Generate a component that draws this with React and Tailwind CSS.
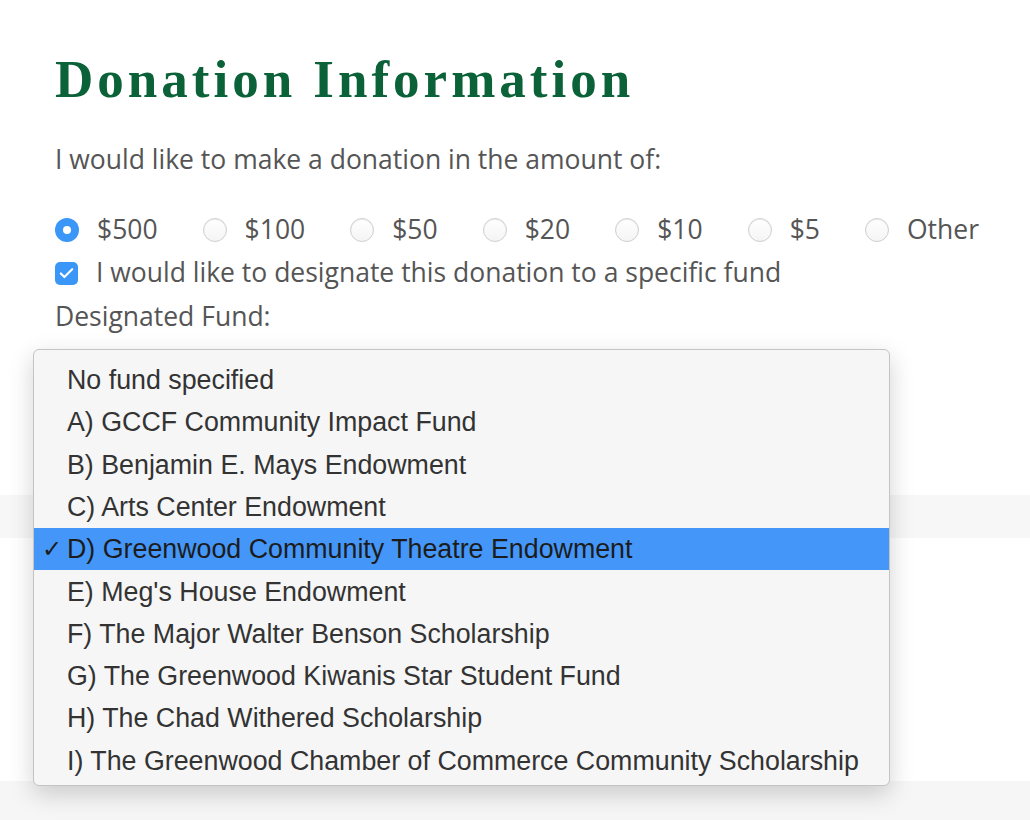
import { Check } from 'lucide-react';

const amounts = ['$500', '$100', '$50', '$20', '$10', '$5', 'Other'];

const funds = [
  'No fund specified',
  'A) GCCF Community Impact Fund',
  'B) Benjamin E. Mays Endowment',
  'C) Arts Center Endowment',
  'D) Greenwood Community Theatre Endowment',
  "E) Meg's House Endowment",
  'F) The Major Walter Benson Scholarship',
  'G) The Greenwood Kiwanis Star Student Fund',
  'H) The Chad Withered Scholarship',
  'I) The Greenwood Chamber of Commerce Community Scholarship',
];

const selectedFund = 4;

function Radio({ checked }) {
  if (checked) {
    return (
      <span className="flex h-[24px] w-[24px] shrink-0 items-center justify-center rounded-full bg-[#3b97f7]">
        <span className="h-[8px] w-[8px] rounded-full bg-white" />
      </span>
    );
  }
  return (
    <span className="h-[24px] w-[24px] shrink-0 rounded-full border border-[#cfcfcf] bg-gradient-to-b from-white to-[#f4f4f4] shadow-[inset_0_1px_1px_rgba(0,0,0,0.08)]" />
  );
}

function FundMenu() {
  return (
    <div className="absolute left-[33px] top-[349px] w-[857px] rounded-[6px] border border-[#c4c4c4] bg-[#f6f6f6] pt-[9px] pb-[3px] shadow-[0_8px_24px_rgba(0,0,0,0.18)] font-['Liberation_Sans',Arial,sans-serif] text-[26.8px] text-[#333]">
      {funds.map((fund, i) => {
        const active = i === selectedFund;
        return (
          <div
            key={fund}
            className={`relative flex h-[42.3px] items-center pl-[33px] ${active ? 'bg-[#4497f8] text-[#1c1c1c]' : ''}`}
          >
            {active && (
              <span className="absolute left-[8px] top-1/2 -translate-y-1/2 font-['DejaVu_Sans',sans-serif] text-[24px]">✓</span>
            )}
            {fund}
          </div>
        );
      })}
    </div>
  );
}

export default function App() {
  return (
    <div className="relative min-h-[820px] w-full overflow-hidden bg-white font-['Open_Sans',sans-serif] text-[#555]">
      <div className="px-[55px] pt-[53px]">
        <h1 className="font-['Liberation_Serif',serif] text-[53px] font-bold leading-none tracking-[4px] text-[#0b6238]">
          Donation Information
        </h1>
        <p className="mt-[37px] h-[32px] text-[26.5px] leading-[32px]">
          I would like to make a donation in the amount of:
        </p>
        <div className="mt-[33px] flex h-[44px] items-center gap-[45px] text-[26.5px]">
          {amounts.map((a, i) => (
            <label key={a} className="flex items-center gap-[18px]">
              <Radio checked={i === 0} />
              <span>{a}</span>
            </label>
          ))}
        </div>
        <label className="flex h-[42px] items-center gap-[18px] text-[26.5px]">
          <span className="flex h-[23px] w-[23px] shrink-0 items-center justify-center rounded-[5px] bg-[#3b97f7]">
            <Check size={17} strokeWidth={3} className="text-white" />
          </span>
          <span>I would like to designate this donation to a specific fund</span>
        </label>
        <p className="h-[44px] text-[26.5px] leading-[44px]">Designated Fund:</p>
      </div>

      <div className="mt-[157px] h-[43px] bg-[#f7f7f7]" />
      <div className="h-[243px]" />
      <div className="h-[40px] bg-[#f6f6f6]" />

      <FundMenu />
    </div>
  );
}
